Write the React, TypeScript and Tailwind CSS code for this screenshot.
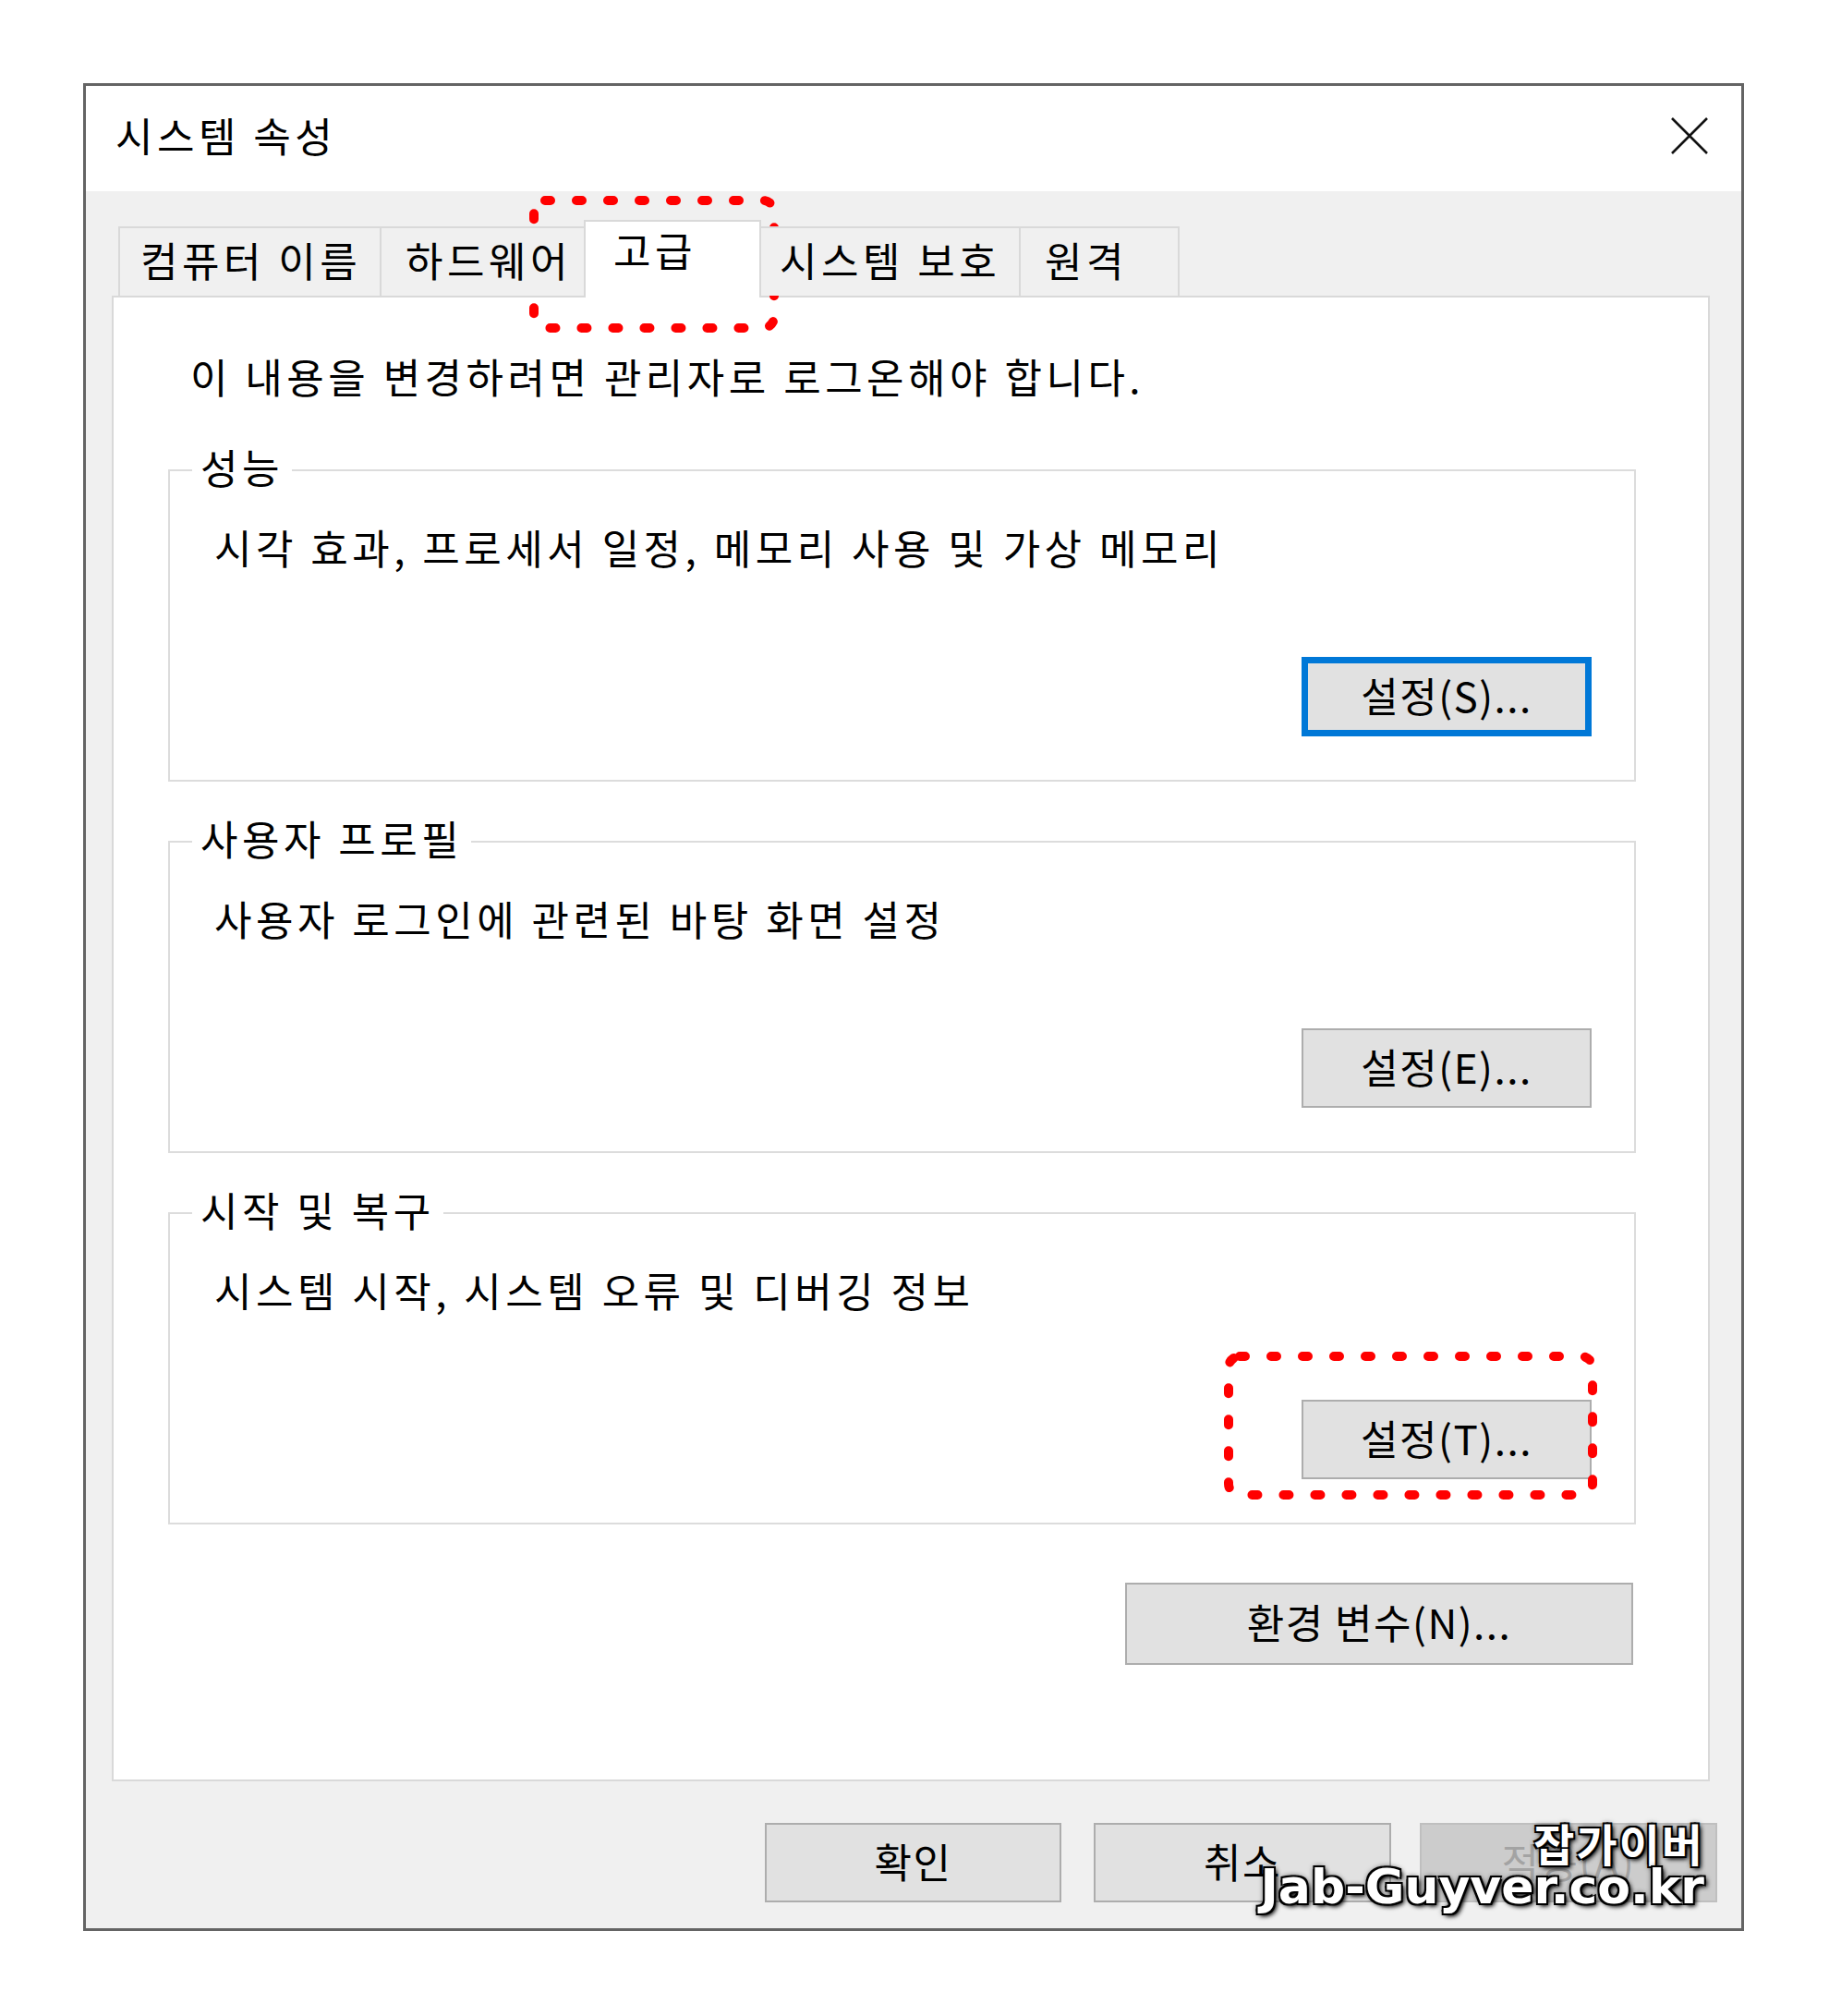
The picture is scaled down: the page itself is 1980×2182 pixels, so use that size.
import React from "react";

const tabs = [
  { label: "컴퓨터 이름", cls: "w-[283px] pl-[22px] pb-[6px] h-[75px] mb-[2px] border-t-2 border-l-2 border-[#d9d9d9] bg-[#f0f0f0]" },
  { label: "하드웨어", cls: "w-[221px] pl-[26px] pb-[6px] h-[75px] mb-[2px] border-t-2 border-l-2 border-[#d9d9d9] bg-[#f0f0f0]" },
  { label: "고급", cls: "w-[192px] pl-[30px] pb-[22px] h-[84px] border-t-2 border-x-2 border-[#d9d9d9] bg-white" },
  { label: "시스템 보호", cls: "w-[279px] pl-[20px] pb-[6px] h-[75px] mb-[2px] border-t-2 border-[#d9d9d9] bg-[#f0f0f0]" },
  { label: "원격", cls: "w-[174px] pl-[26px] pb-[6px] h-[75px] mb-[2px] border-t-2 border-x-2 border-[#d9d9d9] bg-[#f0f0f0]" },
];

const groups = [
  { title: "성능", desc: "시각 효과, 프로세서 일정, 메모리 사용 및 가상 메모리", button: "설정(S)...", focused: true },
  { title: "사용자 프로필", desc: "사용자 로그인에 관련된 바탕 화면 설정", button: "설정(E)...", focused: false },
  { title: "시작 및 복구", desc: "시스템 시작, 시스템 오류 및 디버깅 정보", button: "설정(T)...", focused: false },
];

const WinButton = ({ label, focused = false, className = "" }: { label: string; focused?: boolean; className?: string }) => (
  <div
    className={
      "flex items-center justify-center bg-[#e1e1e1] leading-none tracking-[1.5px] pb-[5px] " +
      (focused ? "border-[7px] border-[#0078d7] " : "border-2 border-[#adadad] ") +
      className
    }
  >
    {label}
  </div>
);

const GroupBox = ({ title, desc, button, focused, first }: { title: string; desc: string; button: string; focused: boolean; first: boolean }) => (
  <fieldset className={"border-2 border-[#dcdcdc] " + (first ? "mt-[37px]" : "mt-[35px]")}>
    <legend className="ml-[24px] px-[9px] leading-[52px] pb-[8px]">{title}</legend>
    <div className="pt-[23px] pl-[48px] pr-[46px] pb-[47px]">
      <p className="leading-[60px]">{desc}</p>
      <div className="mt-[89px] flex justify-end">
        <WinButton label={button} focused={focused} className="w-[314px] h-[86px]" />
      </div>
    </div>
  </fieldset>
);

export default function App() {
  return (
    <div className="relative w-[1980px] h-[2182px] bg-white pt-[90px] pl-[90px] font-['Noto_Sans_CJK_KR','Noto_Sans_CJK_SC',sans-serif] text-[44px] tracking-[4.5px] text-black">
      <div className="w-[1798px] h-[2000px] border-[3px] border-[#646464] bg-[#f0f0f0] flex flex-col">
        {/* title bar */}
        <div className="h-[114px] bg-white flex items-center justify-between pl-[32px] pr-[36px]">
          <span className="leading-[60px] pb-[8px]">시스템 속성</span>
          <svg width="40" height="40" viewBox="0 0 40 40" className="mt-[-6px]">
            <path d="M1 1L39 39M39 1L1 39" stroke="#111" strokeWidth="2.6" fill="none" />
          </svg>
        </div>

        {/* tabs */}
        <div className="pt-[31px] pl-[35px] flex items-end relative z-10 -mb-[2px]">
          {tabs.map((t) => (
            <div key={t.label} className={"flex items-center leading-none " + t.cls}>
              {t.label}
            </div>
          ))}
        </div>

        {/* tab panel */}
        <div className="ml-[28px] w-[1730px] h-[1608px] border-2 border-[#d9d9d9] bg-white">
          <p className="pt-[55px] pl-[83px] leading-[60px]">이 내용을 변경하려면 관리자로 로그온해야 합니다.</p>
          <div className="mt-[5px] ml-[59px] w-[1589px] flex flex-col">
            {groups.map((g, i) => (
              <GroupBox key={g.title} {...g} first={i === 0} />
            ))}
            <WinButton label="환경 변수(N)..." className="self-end mr-[3px] mt-[63px] w-[550px] h-[89px]" />
          </div>
        </div>

        {/* footer buttons */}
        <div className="mt-[45px] flex justify-end pr-[26px]">
          <WinButton label="확인" className="w-[321px] h-[86px]" />
          <WinButton label="취소" className="ml-[35px] w-[322px] h-[86px]" />
          <div className="ml-[31px] w-[322px] h-[86px] border-2 border-[#bfbfbf] bg-[#cccccc] text-[#a3a3a3] flex items-center justify-center leading-none tracking-[1.5px] pb-[5px]">
            적용(A)
          </div>
        </div>
      </div>

      {/* red dotted annotations */}
      <svg className="absolute left-0 top-0 pointer-events-none" width="1980" height="2182">
        <rect x="578" y="217" width="260" height="138" rx="12" fill="none" stroke="#ff0000" strokeWidth="10" strokeLinecap="round" strokeDasharray="6 28" />
        <rect x="1330" y="1468" width="394" height="150" rx="12" fill="none" stroke="#ff0000" strokeWidth="10" strokeLinecap="round" strokeDasharray="6 28" />
      </svg>

      {/* watermark */}
      <div className="absolute right-[135px] top-[1968px] flex flex-col items-end text-white font-bold tracking-normal [text-shadow:2px_2px_0_#000,-2px_-2px_0_#000,2px_-2px_0_#000,-2px_2px_0_#000,0_0_6px_#000,3px_3px_5px_#000]">
        <span className="text-[48px] leading-[52px] tracking-[2px]">잡가이버</span>
        <span className="font-['DejaVu_Sans',sans-serif] text-[52px] leading-[52px] -mt-[4px]">Jab-Guyver.co.kr</span>
      </div>
    </div>
  );
}
